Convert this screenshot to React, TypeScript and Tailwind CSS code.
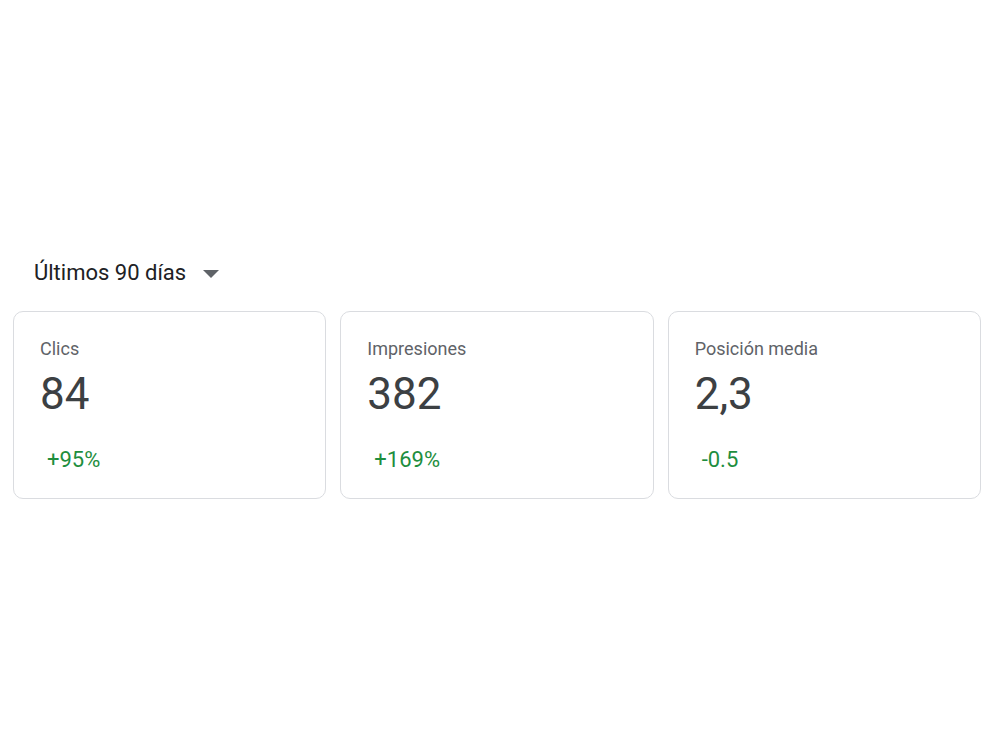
import React from "react";

const metrics = [
  { label: "Clics", value: "84", delta: "+95%" },
  { label: "Impresiones", value: "382", delta: "+169%" },
  { label: "Posición media", value: "2,3", delta: "-0.5" },
];

const App = () => {
  return (
    <div className="min-h-screen bg-white font-['Roboto',sans-serif] px-[13px] pt-[256px]">
      <button className="flex items-center gap-[17px] pl-[21px] h-[32px] text-[22px] text-[#202124]">
        <span>Últimos 90 días</span>
        <svg width="16" height="8" viewBox="0 0 16 8" className="mt-[4px]">
          <path d="M0 0 L16 0 L8 8 Z" fill="#5f6368" />
        </svg>
      </button>

      <div className="grid grid-cols-3 gap-[14px] mt-[23px] w-[968px]">
        {metrics.map((m) => (
          <div
            key={m.label}
            className="h-[188px] rounded-[10px] border border-[#dadce0] bg-white pl-[26px] pt-[26px]"
          >
            <p className="text-[18px] leading-[22px] text-[#5f6368]">{m.label}</p>
            <p className="text-[44px] leading-[50px] mt-[9px] text-[#3c4043]">{m.value}</p>
            <p className="text-[22px] leading-[26px] mt-[28px] ml-[7px] text-[#1e8e3e]">{m.delta}</p>
          </div>
        ))}
      </div>
    </div>
  );
};

export default App;
